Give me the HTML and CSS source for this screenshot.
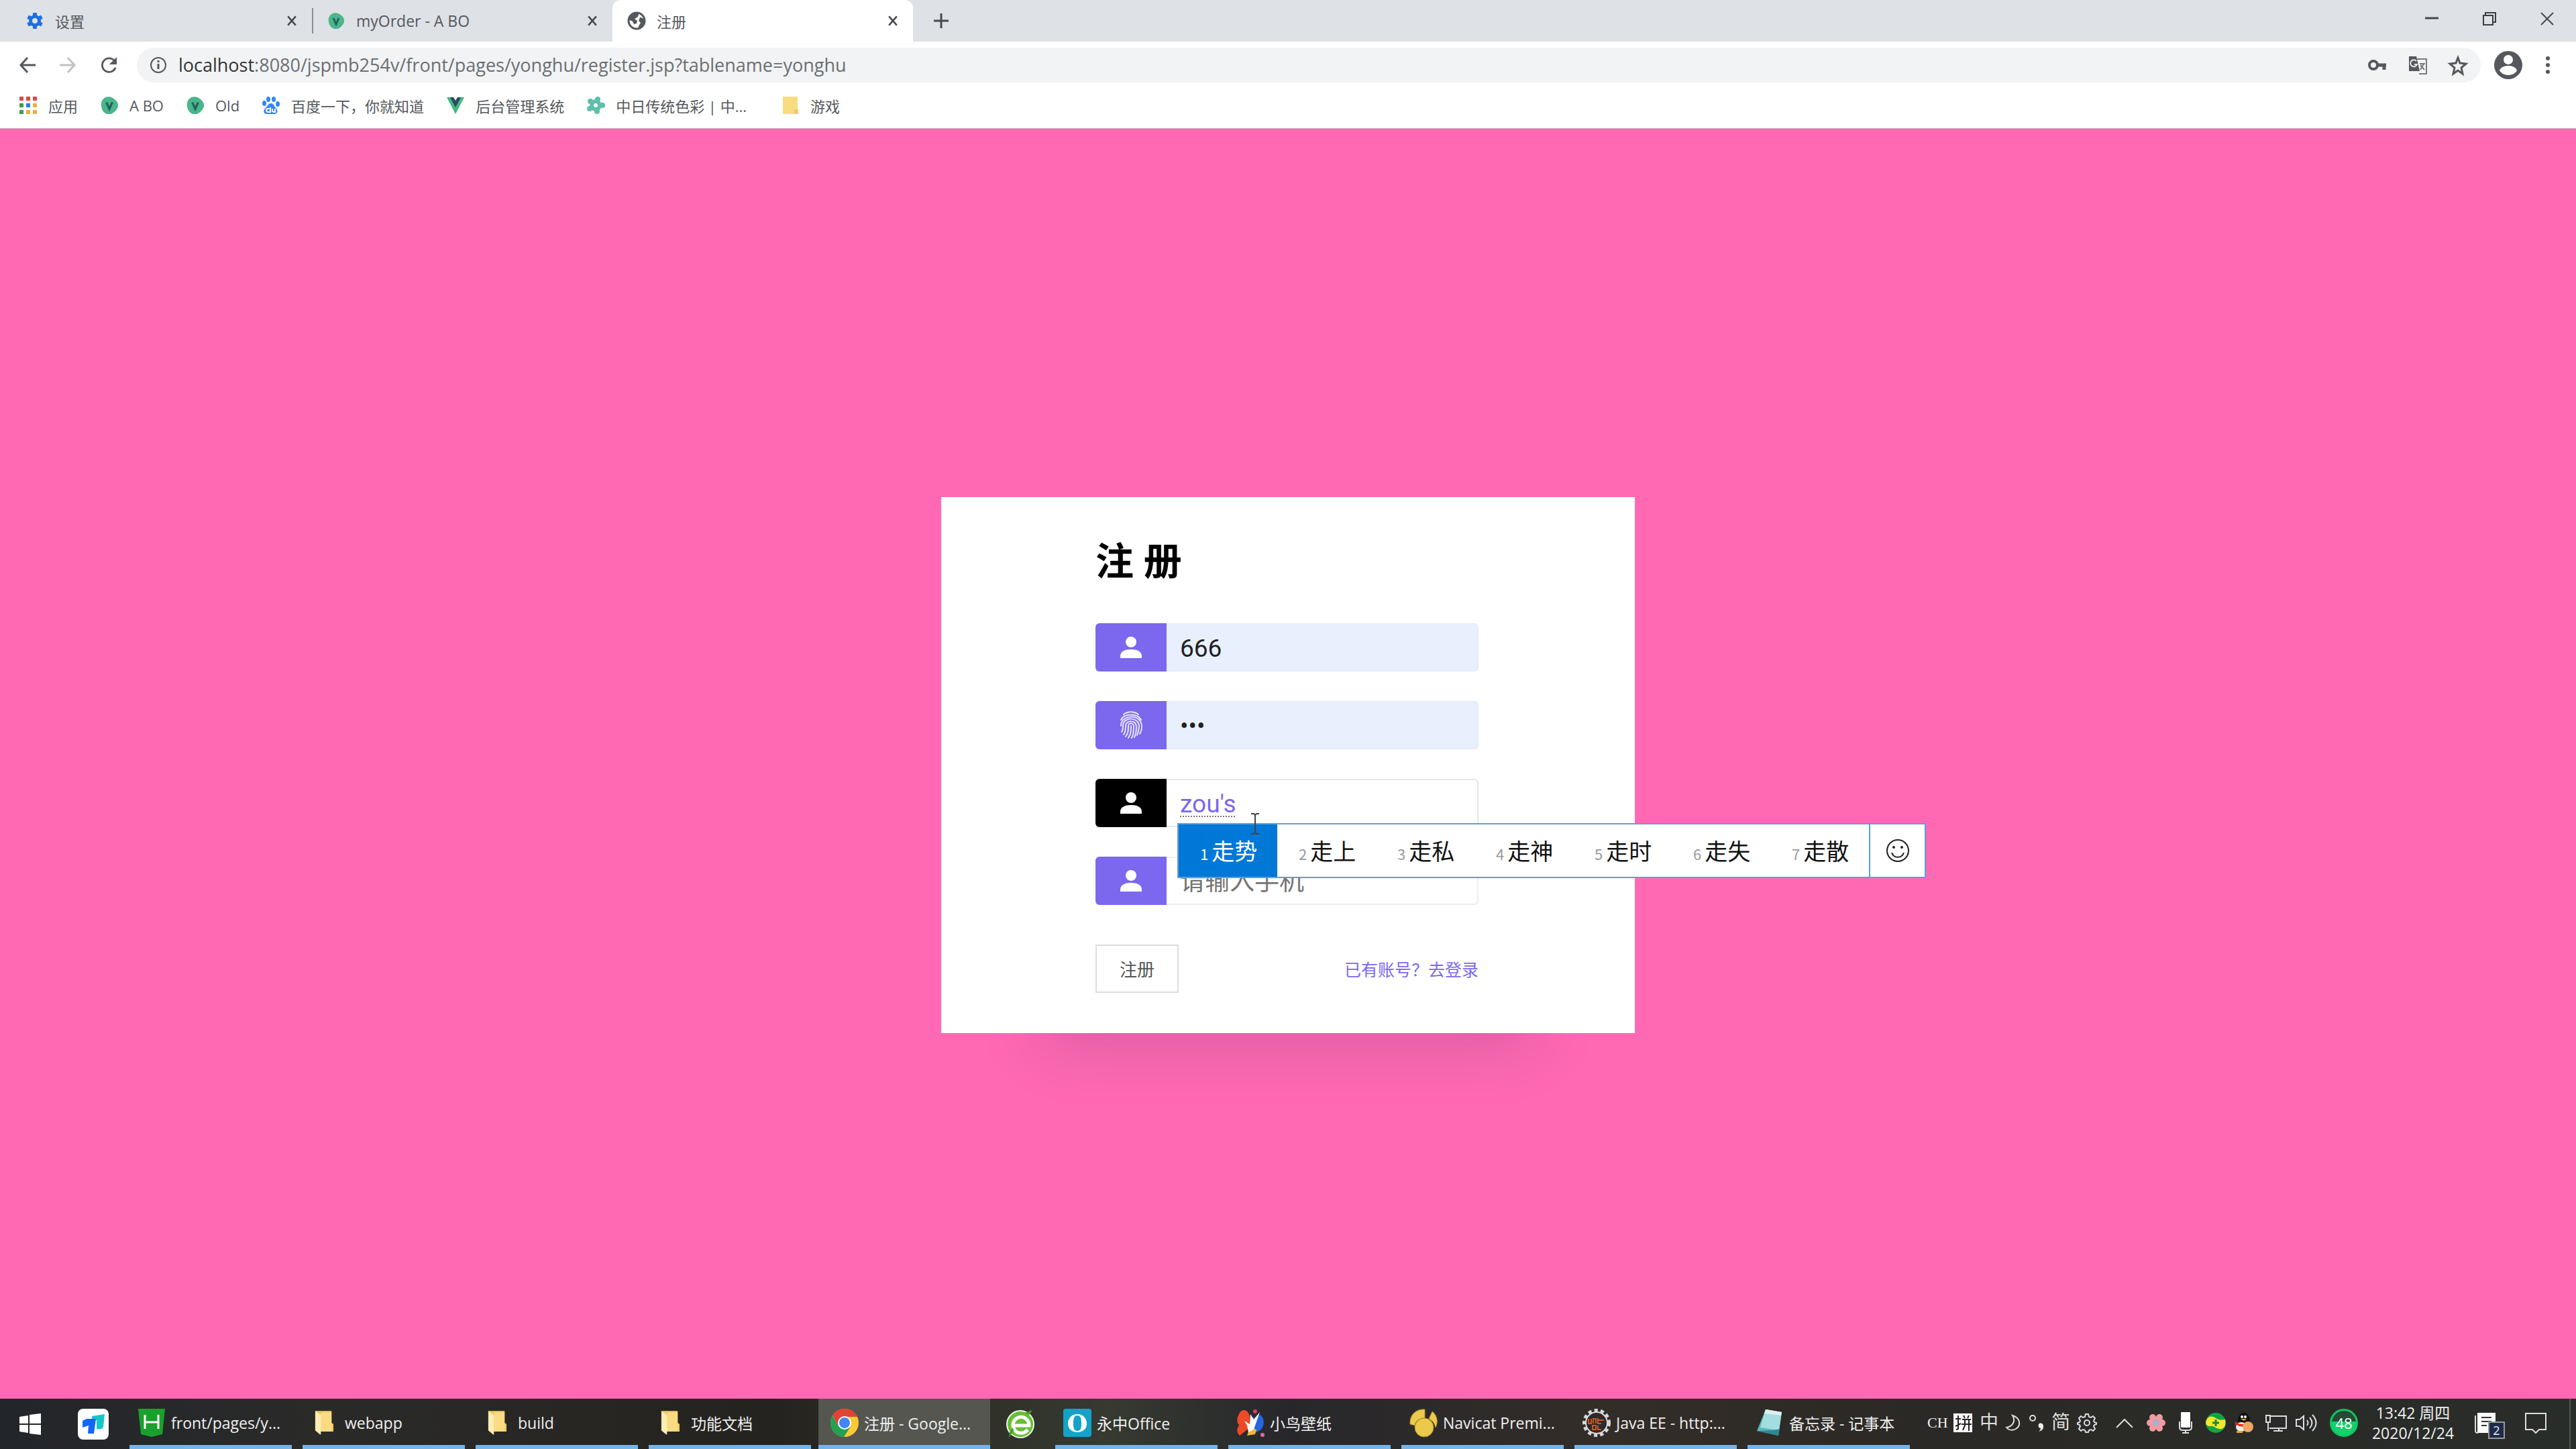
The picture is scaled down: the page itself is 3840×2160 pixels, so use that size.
FILE: index.html
```html
<!DOCTYPE html>
<html lang="zh-CN">
<head>
<meta charset="utf-8">
<title>注册</title>
<link rel="stylesheet" href="styles.css">
</head>
<body>
<svg class="sprite" aria-hidden="true">
  <symbol id="close" viewBox="0 0 24 24"><path d="M5 4 19 20M19 4 5 20" stroke="#45484c" stroke-width="3" fill="none"/></symbol>
  <symbol id="leaf" viewBox="0 0 24 24"><path d="M3 4C6 0 12-1 17 2c5 3 8 7 7 12-2 5-6 9-12 11-6-1-10-5-11-11C0 10 1 7 3 4Z" fill="#4bb58b"/><path d="m8 8 4 9 4-9" stroke="#22635c" stroke-width="3" fill="none"/></symbol>
  <symbol id="folder" viewBox="0 0 30 38"><path d="M1 0H27V19L30 21V33H9V38L1 31Z" fill="#f2cc62"/><path d="M12 2H27V33H9V7Z" fill="#f9dc82"/><path d="M1 0 10 7V38L1 31Z" fill="#fdedb5"/></symbol>
  <symbol id="person" viewBox="0 0 32 32"><circle cx="16" cy="8" r="8"/><path d="M0 32v-3c0-7 7-10 16-10s16 3 16 10v3Z"/></symbol>
</svg>

<header class="browser">
  <nav class="tabs" aria-label="标签页">
    <div class="tab">
      <svg class="ico24" viewBox="0 0 24 24"><g fill="#1f6fe0"><circle cx="12" cy="12" r="9"/><rect x="9" y="0" width="6" height="24" rx="1"/><rect x="9" y="0" width="6" height="24" rx="1" transform="rotate(60 12 12)"/><rect x="9" y="0" width="6" height="24" rx="1" transform="rotate(120 12 12)"/></g><circle cx="12" cy="12" r="4" fill="#dee1e6"/></svg>
      <span>设置</span>
      <button class="plain" aria-label="关闭"><svg class="ico20"><use href="#close"/></svg></button>
    </div>
    <div class="tab second">
      <svg class="ico24"><use href="#leaf"/></svg>
      <span>myOrder - A BO</span>
      <button class="plain" aria-label="关闭"><svg class="ico20"><use href="#close"/></svg></button>
    </div>
    <div class="tab active">
      <svg class="ico28" viewBox="0 0 28 28"><circle cx="14" cy="14" r="12" fill="#fff" stroke="#55585c" stroke-width="3"/><path d="M14 2C8 2 3 7 2 12l6 3 2 4 4-1 1-4-4-3 5-3 1-4-3-2ZM19 9l-2 5 3 3-3 5-1 4c5-1 9-5 10-10-1-5-3-7-7-7Z" fill="#55585c"/></svg>
      <span>注册</span>
      <button class="plain" aria-label="关闭"><svg class="ico20"><use href="#close"/></svg></button>
    </div>
    <button class="plain newtab" aria-label="新标签页"><svg class="ico24" viewBox="0 0 24 24"><path d="M12 1v22M1 12h22" stroke="#45484c" stroke-width="3"/></svg></button>
    <div class="window-controls">
      <button class="plain" aria-label="最小化"><svg class="ico20" viewBox="0 0 20 20"><path d="M0 9h20" stroke="#45484c" stroke-width="3"/></svg></button>
      <button class="plain" aria-label="还原"><svg class="ico20" viewBox="0 0 20 20"><path d="M1 5h14v14H1ZM4 4V1h15v14h-3" stroke="#3a3d40" stroke-width="2" fill="none"/></svg></button>
      <button class="plain" aria-label="关闭窗口"><svg class="ico20" viewBox="0 0 20 20"><path d="m1 1 18 18M19 1 1 19" stroke="#45484c" stroke-width="2"/></svg></button>
    </div>
  </nav>

  <div class="toolbar">
    <button class="plain" aria-label="后退"><svg class="ico24" viewBox="0 0 24 24"><path d="M24 12H2M12 1 2 12l10 11" stroke="#55585c" stroke-width="3" fill="none"/></svg></button>
    <button class="plain" aria-label="前进"><svg class="ico24" viewBox="0 0 24 24"><path d="M0 12h22M12 1l10 11-10 11" stroke="#bfc1c4" stroke-width="3" fill="none"/></svg></button>
    <button class="plain" aria-label="重新加载"><svg class="ico26" viewBox="0 0 28 28"><path d="M23 7A11 11 0 1 0 25 18" stroke="#55585c" stroke-width="3" fill="none"/><path d="M27 1v12H15Z" fill="#55585c"/></svg></button>
    <div class="omnibox">
      <svg class="ico24" viewBox="0 0 24 24"><circle cx="12" cy="12" r="11" fill="none" stroke="#55585c" stroke-width="2"/><path d="M12 10v8M12 5v3" stroke="#55585c" stroke-width="3"/></svg>
      <p class="url"><b>localhost</b>:8080/jspmb254v/front/pages/yonghu/register.jsp?tablename=yonghu</p>
      <svg class="ico28" viewBox="0 0 28 28"><circle cx="8" cy="14" r="6" fill="none" stroke="#55585c" stroke-width="4"/><path d="M14 14h13M24 14v7" stroke="#55585c" stroke-width="5"/></svg>
      <svg class="ico28" viewBox="0 0 28 28"><path d="M13 5h14v22H16" fill="#f5f6f7" stroke="#777a7d" stroke-width="2"/><path d="M17 12h8M18 21l5-9M18 14l6 7" stroke="#777a7d" stroke-width="2"/><path d="M1 1h11l5 22H1Z" fill="#55585c"/><path d="M12 8a5 5 0 1 0 1 5H9" fill="none" stroke="#e8eaed" stroke-width="2"/></svg>
      <svg class="ico28" viewBox="0 0 28 28"><path d="m14 3 3 8 9 1-7 6 2 9-7-5-7 5 2-9-7-6 9-1Z" fill="none" stroke="#55585c" stroke-width="3"/></svg>
    </div>
    <button class="plain" aria-label="用户"><svg class="ico42" viewBox="0 0 42 42"><circle cx="21" cy="21" r="21" fill="#55585c"/><circle cx="21" cy="13" r="7" fill="#fff"/><path d="M8 29c2-5 7-7 13-7s11 2 13 7c-3 5-8 7-13 7s-10-2-13-7Z" fill="#fff"/></svg></button>
    <button class="plain" aria-label="菜单"><svg class="ico28" viewBox="0 0 28 28"><g fill="#55585c"><circle cx="14" cy="4" r="3"/><circle cx="14" cy="14" r="3"/><circle cx="14" cy="24" r="3"/></g></svg></button>
  </div>

  <nav class="bookmarks" aria-label="书签">
    <a href="#"><svg class="ico26" viewBox="0 0 26 26"><path d="M0 0h6v6H0ZM10 0h6v6h-6ZM20 0h6v6h-6Z" fill="#dc4a40"/><path d="M0 10h6v6H0ZM0 20h6v6H0Z" fill="#3b9b55"/><path d="M10 10h6v6h-6Z" fill="#2f7cee"/><path d="M20 10h6v6h-6ZM10 20h6v6h-6ZM20 20h6v6h-6Z" fill="#ecae3c"/></svg>应用</a>
    <a href="#"><svg class="ico26"><use href="#leaf"/></svg>A BO</a>
    <a href="#"><svg class="ico26"><use href="#leaf"/></svg>Old</a>
    <a href="#"><svg class="ico26" viewBox="0 0 26 26"><g fill="#3385ff"><ellipse cx="9" cy="4" rx="3" ry="4"/><ellipse cx="17" cy="4" rx="3" ry="4"/><ellipse cx="3" cy="10" rx="3" ry="4"/><ellipse cx="23" cy="11" rx="3" ry="4"/><path d="M13 10c4 0 5 5 8 8 3 4 1 8-3 8H7c-5 0-6-5-3-8 4-4 5-8 9-8Z"/></g><path d="M12 16v7H8c-3-1-2-5 0-5h4M15 18v4c1 1 2 1 4 1v-5" stroke="#fff" stroke-width="2" fill="none"/></svg>百度一下，你就知道</a>
    <a href="#"><svg class="ico26" viewBox="0 0 26 26"><path d="M0 1h26L13 26Z" fill="#41b883"/><path d="M5 1h16l-8 15Z" fill="#2f495e"/><path d="M10 1h6l-3 5Z" fill="#fff"/></svg>后台管理系统</a>
    <a href="#"><svg class="ico26" viewBox="0 0 26 26"><g fill="#5fbfab"><circle cx="13" cy="13" r="9"/><circle cx="16" cy="4" r="4"/><circle cx="5" cy="7" r="4"/><circle cx="4" cy="18" r="4"/><circle cx="15" cy="22" r="4"/><circle cx="23" cy="13" r="4"/></g><circle cx="13" cy="13" r="3" fill="#fff"/></svg>中日传统色彩 | 中...</a>
    <a href="#" class="folder-mark"><svg class="ico26" viewBox="0 0 26 26"><path d="M2 0h22v26H2Z" fill="#f8dc80"/><path d="M19 19h6v7h-6Z" fill="#f0cb68"/></svg>游戏</a>
  </nav>
</header>

<main class="page">
  <form class="card">
    <h1>注 册</h1>
    <div class="field filled">
      <label for="account" aria-label="账号"><svg class="person"><use href="#person"/></svg></label>
      <input id="account" type="text" value="666">
    </div>
    <div class="field filled">
      <label for="password" aria-label="密码"><svg class="finger" viewBox="0 0 34 42"><g fill="none" stroke="#e9e5ff" stroke-width="2" stroke-linecap="round"><path d="M6 5c6-5 16-5 22 0M2 13c5-10 25-10 30 0M2 22c-1-17 31-19 31 1 0 5-1 8-3 11M3 31c2-3 2-6 2-9 0-14 24-14 24 1 0 6-2 10-3 13M6 35c3-4 3-8 3-13 0-9 16-9 16 1 0 6-1 12-3 16M9 38c4-5 4-10 4-16 0-5 8-5 8 1 0 6 0 11-3 17M13 40c4-6 4-11 4-18"/></g></svg></label>
      <input id="password" type="password" value="666">
    </div>
    <div class="field focused">
      <label for="name" aria-label="姓名"><svg class="person"><use href="#person"/></svg></label>
      <input id="name" type="text" value="zou's">
      <svg class="caret" viewBox="0 0 14 32"><path d="M1 1h4l2 2 2-2h4M7 3v26M1 31h4l2-2 2 2h4" fill="none" stroke="#444" stroke-width="2"/></svg>
      <div class="ime">
        <ol>
          <li class="chosen"><small>1</small>走势</li>
          <li><small>2</small>走上</li>
          <li><small>3</small>走私</li>
          <li><small>4</small>走神</li>
          <li><small>5</small>走时</li>
          <li><small>6</small>走失</li>
          <li><small>7</small>走散</li>
        </ol>
        <button type="button" class="plain emoji" aria-label="表情"><svg viewBox="0 0 36 36"><g fill="none" stroke="#222" stroke-width="2"><circle cx="18" cy="18" r="16"/><path d="M9 21c3 9 15 9 18 0"/></g><circle cx="12" cy="13" r="2" fill="#222"/><circle cx="24" cy="13" r="2" fill="#222"/></svg></button>
      </div>
    </div>
    <div class="field">
      <label for="phone" aria-label="手机"><svg class="person"><use href="#person"/></svg></label>
      <input id="phone" type="tel" placeholder="请输入手机">
    </div>
    <div class="actions">
      <button type="button" class="submit">注册</button>
      <a href="#">已有账号？去登录</a>
    </div>
  </form>
</main>

<footer class="taskbar">
  <button class="plain start" aria-label="开始"><svg viewBox="0 0 32 32"><path d="m0 5 13-2v12H0ZM15 2l17-2v15H15ZM0 17h13v12L0 27ZM15 17h17v15l-17-2Z" fill="#fff"/></svg></button>
  <button class="plain pinned" aria-label="待办"><svg viewBox="0 0 46 46"><rect width="46" height="46" rx="8" fill="#fff"/><path d="m21 11 19-3-2 19c0 3-6 4-10 3V17h-7Z" fill="#14c8c8"/><path d="m7 18 6-3h14l-3 22H15l1-12-9 3Z" fill="#1266ff"/></svg></button>
  <div class="tasks">
    <button class="task"><svg class="app" viewBox="0 0 42 42"><path d="M1 0h40l-4 38-16 4-16-4Z" fill="#1aa02c"/><path d="M11 9v21M31 9v21M11 20h20" stroke="#fff" stroke-width="3"/></svg>front/pages/y...</button>
    <button class="task wide"><svg class="dir"><use href="#folder"/></svg>webapp</button>
    <button class="task wide"><svg class="dir"><use href="#folder"/></svg>build</button>
    <button class="task wide"><svg class="dir"><use href="#folder"/></svg>功能文档</button>
  </div>
  <button class="task current"><svg class="app" viewBox="0 0 42 42"><circle cx="21" cy="21" r="21" fill="#fbc934"/><path d="M3 10a21 21 0 0 1 36 0l1 2H21l-9 14Z" fill="#e24337"/><path d="M3 10a21 21 0 0 0 17 32l9-14-17-2Z" fill="#24a052"/><circle cx="21" cy="21" r="10" fill="#fff"/><circle cx="21" cy="21" r="8" fill="#4285f4"/></svg>注册 - Google...</button>
  <button class="plain browser360" aria-label="浏览器"><svg viewBox="0 0 42 42"><circle cx="21" cy="21" r="20" fill="#68bf35" stroke="#f1f8ec" stroke-width="2"/><path d="M32 29a12 12 0 1 1 2-6H12" fill="none" stroke="#fff" stroke-width="5"/><path d="M4 41c0-8 3-12 6-15l1 5ZM27 4 39 0l-5 7Z" fill="#4a9b27"/></svg></button>
  <div class="tasks">
    <button class="task"><svg class="app" viewBox="0 0 42 42"><rect width="42" height="42" rx="4" fill="#13a3c8"/><path fill-rule="evenodd" d="M21 8c8 0 14 6 14 14s-6 13-14 13S7 30 7 22 13 8 21 8Zm0 2c-5 0-6 5-6 12s1 11 6 11 6-4 6-11-1-12-6-12Z" fill="#fff"/></svg>永中Office</button>
    <button class="task"><svg class="app" viewBox="0 0 42 42"><path d="M3 10C7-2 18 0 20 12v16L5 40C-2 32 3 28 4 24 0 20 1 14 3 10Z" fill="#ee4a26"/><path d="m22 15 14-6c8 8 4 18 1 22l-14 8Z" fill="#2467df"/><circle cx="28" cy="4" r="3" fill="#e53a60"/><path d="M16 40 28 38l2-7-10-3Z" fill="#f2b92c"/><path d="m12 18 8 5 1-15 5 8 9-11-9 26-8 4-2-10Z" fill="#fff"/><circle cx="39" cy="39" r="3" fill="#e369a9"/></svg>小鸟壁纸</button>
    <button class="task"><svg class="app" viewBox="0 0 42 42"><g fill="#ebc94a" stroke="#a98a22"><path d="M1 23C0 8 11 0 23 1v13C14 15 9 18 8 25ZM34 4c8 6 9 17 5 24-2-8-6-11-10-13Z"/><circle cx="22" cy="28" r="14"/></g></svg>Navicat Premi...</button>
    <button class="task"><svg class="app" viewBox="0 0 42 42"><circle cx="21" cy="21" r="18" fill="none" stroke="#d7d8da" stroke-width="6" stroke-dasharray="5 4"/><circle cx="21" cy="21" r="16" fill="#30282b" stroke="#d7d8da" stroke-width="2"/><path d="M9 15v7h4v-7M16 22v-7h4v7M23 14v8h5M24 17h8M15 25h5v6h-5ZM23 25v6h5" fill="none" stroke="#c95a1d" stroke-width="2"/></svg>Java EE - http:...</button>
    <button class="task"><svg class="app" viewBox="0 0 42 42"><path d="m15 1 24 4-5 35L2 33Z" fill="#5cb5bf"/><path d="m15 1 24 4-4 27L7 28Z" fill="#a4dde0"/><path d="M15 1 39 5l-1 5L13 7Z" fill="#e0eeee"/><path d="m2 33 32 7 2-10-10 2Z" fill="#2f8792"/></svg>备忘录 - 记事本</button>
  </div>
  <div class="tray">
    <span class="lang">CH</span>
    <svg class="t28" viewBox="0 0 28 28"><rect width="28" height="28" fill="#fff"/><path d="M3 8h8M3 19l8-4M7 3v20l-3 1M15 3l2 4M23 3l-2 4M13 9h13M12 16h15M17 9v9l-3 7M23 9v17" stroke="#222" stroke-width="2" fill="none"/></svg>
    <span class="glyph">中</span>
    <svg class="t22" viewBox="0 0 22 24"><path d="M10 1c5 8 1 16-9 18 3 4 9 5 14 2 8-5 7-16-5-20Z" fill="none" stroke="#ddd" stroke-width="2"/></svg>
    <svg class="t22" viewBox="0 0 22 26"><circle cx="5" cy="6" r="4" fill="none" stroke="#ddd" stroke-width="2"/><path d="M14 15c2-3 8-1 7 4 0 4-3 6-7 7 2-2 3-3 3-5-3 0-4-3-3-6Z" fill="#eee"/></svg>
    <span class="glyph">简</span>
    <svg class="t28" viewBox="0 0 28 28"><path d="m12 1 4 0 1 4 3 1 3-2 3 3-2 4 1 2 3 1v2l-3 1-1 2 2 4-3 3-3-2-3 1-1 3h-4l-1-3-3-1-3 2-3-3 2-4-1-2-3-1v-2l3-1 1-2-2-4 3-3 3 2 3-1Z" fill="none" stroke="#ddd" stroke-width="2"/><circle cx="14" cy="14" r="4" fill="none" stroke="#ddd" stroke-width="2"/></svg>
    <svg class="t26 up" viewBox="0 0 26 26"><path d="m1 20 12-12 12 12" fill="none" stroke="#ddd" stroke-width="2"/></svg>
    <svg class="t28" viewBox="0 0 28 28"><g fill="#f29aa4"><circle cx="9" cy="6" r="5"/><circle cx="19" cy="6" r="5"/><circle cx="5" cy="14" r="5"/><circle cx="23" cy="14" r="5"/><circle cx="9" cy="22" r="5"/><circle cx="19" cy="22" r="5"/><circle cx="14" cy="14" r="9"/></g><circle cx="14" cy="14" r="5" fill="#a9b0c9"/></svg>
    <svg class="t22 mic" viewBox="0 0 22 32"><rect x="4" width="14" height="23" rx="1" fill="#fff"/><path d="M2 14v9q0 4 5 4h8q5 0 5-4v-9M11 27v3M6 31h10" fill="none" stroke="#ddd" stroke-width="2"/></svg>
    <svg class="t30" viewBox="0 0 30 30"><circle cx="15" cy="15" r="15" fill="#12a444"/><path d="M0 14C3 4 10 4 15 8c5 3 9 3 14 2 2 12-4 15-9 14-6-1-8-5-13-4-4 0-7-2-7-6Z" fill="#f8e52c"/><path d="M15 10v10M10 15h10" stroke="#198d35" stroke-width="3"/></svg>
    <svg class="t28 penguin" viewBox="0 0 28 30"><ellipse cx="14" cy="12" rx="9" ry="12" fill="#111"/><ellipse cx="10" cy="21" rx="8" ry="7" fill="#eee"/><path d="M1 13c5 5 14 5 20 1v6C14 22 5 20 1 17Z" fill="#e32b1d"/><circle cx="11" cy="6" r="2" fill="#fff"/><circle cx="16" cy="6" r="2" fill="#fff"/><path d="M9 9h9l-4 3ZM3 27h9v3H3Z" fill="#f0a329"/><circle cx="20" cy="21" r="8" fill="#f1a565"/></svg>
    <svg class="t32" viewBox="0 0 32 28"><path d="M8 4h23v18H6M20 22v4M12 26h14M1 3h6v10H1ZM4 13v13" fill="none" stroke="#ddd" stroke-width="2"/></svg>
    <svg class="t32" viewBox="0 0 32 28"><path d="M1 9h5l6-5v20l-6-5H1ZM17 10q3 4 0 8M21 6q7 8 0 16M25 2q11 12 0 24" fill="none" stroke="#ddd" stroke-width="2"/></svg>
    <span class="battery">48</span>
    <time datetime="2020-12-24T13:42">13:42 周四<br>2020/12/24</time>
    <div class="news"><svg viewBox="0 0 32 32"><path d="M4 1h27v30H4Z" fill="#fff"/><path d="M1 5v23q0 3 4 3" stroke="#ddd" stroke-width="2" fill="none"/><path d="M10 8h15M10 14h15M10 20h8" stroke="#333" stroke-width="2"/></svg><span>2</span></div>
    <svg class="t32" viewBox="0 0 32 32"><path d="M1 2h30v24H21l-5 5-5-5H1Z" fill="none" stroke="#ddd" stroke-width="2"/></svg>
  </div>
</footer>
</body>
</html>
```
FILE: styles.css
```css
* { box-sizing: border-box; }
body {
  margin: 0;
  min-height: 100vh;
  display: flex;
  flex-direction: column;
  font-family: "Open Sans", "Noto Sans CJK SC", sans-serif;
  font-size: 22px;
  color: #55585c;
}
svg { display: block; flex: none; overflow: visible; }
button, input { font: inherit; color: inherit; }
a { color: inherit; text-decoration: none; }
.sprite { position: absolute; width: 0; height: 0; }
.plain { border: 0; padding: 0; background: none; display: flex; align-items: center; justify-content: center; }
.ico20 { width: 20px; height: 20px; }
.ico24 { width: 24px; height: 24px; }
.ico26 { width: 26px; height: 26px; }
.ico28 { width: 28px; height: 28px; }
.ico42 { width: 42px; height: 42px; }

/* browser window */
.browser { background: #fff; border-bottom: 1px solid #d9a9c2; }
.tabs { display: flex; align-items: center; height: 62px; background: #dee1e6; }
.tab { display: flex; align-items: center; width: 448px; height: 62px; padding: 0 20px 0 24px; gap: 18px; }
.tab:first-child { width: 465px; padding-left: 40px; }
.tab .plain { margin-left: auto; }
.tab.second { position: relative; font-size: 23px; }
.tab.second::before { content: ""; position: absolute; left: 0; top: 12px; width: 2px; height: 38px; background: #8a8d91; }
.tab.active { background: #fff; border-radius: 12px 12px 0 0; padding: 0 20px 0 22px; gap: 16px; }
.newtab { margin-left: 30px; }
.window-controls { display: flex; gap: 66px; margin-left: auto; margin-right: 33px; padding-bottom: 6px; }
.toolbar { display: flex; align-items: center; height: 70px; padding: 0 28px 0 29px; }
.toolbar > .plain { margin-right: 36px; }
.toolbar > .plain:nth-child(3) { margin-right: 29px; }
.toolbar > .omnibox ~ .plain { margin: 0 0 0 24px; }
.toolbar > .omnibox + .plain { margin-left: 20px; }
.omnibox { display: flex; align-items: center; flex: 1; height: 52px; padding: 0 20px; gap: 32px; border-radius: 26px; background: #f1f3f4; }
.url { margin: 0 auto 0 -14px; font-size: 27px; line-height: 36px; color: #6b6e72; }
.url b { font-weight: 400; color: #333; }
.bookmarks { display: flex; align-items: center; height: 59px; padding: 0 29px 10px; gap: 34px; }
.bookmarks a { display: flex; align-items: center; gap: 17px; }
.bookmarks .folder-mark { margin-left: 18px; }

/* registration form */
.page { flex: 1; display: flex; align-items: center; justify-content: center; padding-top: 4px; background: #ff69b4; }
.card { width: 1034px; max-width: 100%; padding: 46px 233px 60px 230px; background: #fff; box-shadow: 0 165px 90px -150px rgba(60, 40, 80, .2); }
h1 { margin: 0 0 45px; font-size: 57px; line-height: 97px; color: #000; }
.field { position: relative; display: flex; height: 72px; margin-bottom: 44px; color: #222; font-family: Roboto, "Noto Sans CJK SC", sans-serif; font-size: 37px; }
.field label { display: flex; align-items: center; justify-content: center; width: 106px; border-radius: 6px 0 0 6px; background: #7b68ee; fill: #fff; }
.field input { flex: 1; min-width: 0; padding: 2px 20px 0; border: 2px solid #eee; border-left: 0; border-radius: 0 6px 6px 0; background: #fff; outline: 0; }
.field.filled input { background: #e8f0fe; border-color: #e6ecf8; }
.field input::placeholder { color: #757575; opacity: 1; }
.person { width: 32px; height: 32px; }
.finger { width: 34px; height: 42px; }
.field.focused label { background: #000; }
.field.focused input { color: #7b68ee; border-color: #e6e6e6; text-decoration: underline dotted #777 2px; text-underline-offset: 6px; }
.caret { position: absolute; z-index: 3; left: 231px; top: 51px; width: 14px; height: 32px; }
.ime { position: absolute; z-index: 2; left: 122px; top: 66px; display: flex; height: 82px; border: 2px solid #5b9fdc; background: #fff; color: #111; font-family: "Noto Sans CJK SC", sans-serif; font-size: 34px; }
.ime ol { display: flex; margin: 0; padding: 0; list-style: none; }
.ime li { display: flex; align-items: baseline; gap: 5px; width: 147px; padding: 0 32px; line-height: 78px; white-space: nowrap; }
.ime small { width: 13px; font-size: 22px; color: #999; }
.ime .chosen { background: #0078d7; color: #fff; }
.ime .chosen small { color: #fff; }
.emoji { width: 83px; border-left: 2px solid #5b9fdc; }
.emoji svg { width: 36px; height: 36px; }
.actions { display: flex; align-items: center; justify-content: space-between; margin-top: 59px; font-size: 25px; color: #7b68ee; }
.submit { width: 124px; height: 72px; padding: 0; border: 2px solid #ddd; background: #fff; font-size: 26px; color: #555; }

/* desktop taskbar */
.taskbar { display: flex; height: 75px; background: linear-gradient(90deg, #22252a 0, #2a2a29 12%, #25231f 30%, #363a30 43%, #27272b 50%, #332d28 62%, #2b2926 75%, #292d29 100%); color: #f0f0f0; font-size: 23px; }
.start { width: 90px; }
.start svg { width: 32px; height: 32px; }
.pinned { width: 103px; padding-right: 5px; }
.pinned svg { width: 46px; height: 46px; }
.tasks { display: flex; gap: 16px; }
.task { display: flex; align-items: center; gap: 8px; width: 242px; padding: 2px 0 0 12px; border: 0; border-bottom: 6px solid #76b4e8; background: none; white-space: nowrap; }
.task.wide { gap: 17px; padding-left: 18px; }
.task.current { width: 256px; margin-left: 11px; padding-left: 18px; background: #555650; }
.app { width: 42px; height: 42px; }
.dir { width: 28px; height: 38px; }
.browser360 { width: 97px; padding-right: 8px; }
.browser360 svg { width: 42px; height: 42px; }
.tray { display: flex; align-items: center; gap: 13px; margin-left: auto; padding: 0 34px 4px 0; border-right: 2px solid #555; margin-right: 8px; }
.lang { font-family: "Liberation Serif", serif; font-size: 22px; line-height: 28px; margin-right: -4px; width: 30px; }
.glyph { font-size: 28px; line-height: 36px; width: 28px; padding-bottom: 4px; margin: 0 -2px; color: #ddd; }
.t22 { width: 22px; height: 32px; }
.t26 { width: 26px; height: 26px; }
.t28 { width: 28px; height: 30px; }
.t30 { width: 30px; height: 30px; }
.t32 { width: 32px; height: 32px; }
.up { margin: 0 7px 0 16px; }
.mic { margin: 0 6px; }
.penguin { margin-right: 5px; }
.battery { width: 42px; height: 42px; margin: 0 6px; border: 3px solid #10c864; border-radius: 50%; background: linear-gradient(#244c35 45%, #10d36a 45%); font-size: 22px; line-height: 36px; text-align: center; color: #fff; }
time { width: 126px; line-height: 30px; text-align: center; white-space: nowrap; }
.news { position: relative; width: 44px; height: 32px; margin: 0 18px 0 16px; }
.news svg { width: 32px; height: 32px; }
.news span { position: absolute; left: 20px; top: 14px; width: 25px; height: 26px; border: 2px solid #999; background: #1d2a4b; font-size: 18px; line-height: 22px; text-align: center; }
```
